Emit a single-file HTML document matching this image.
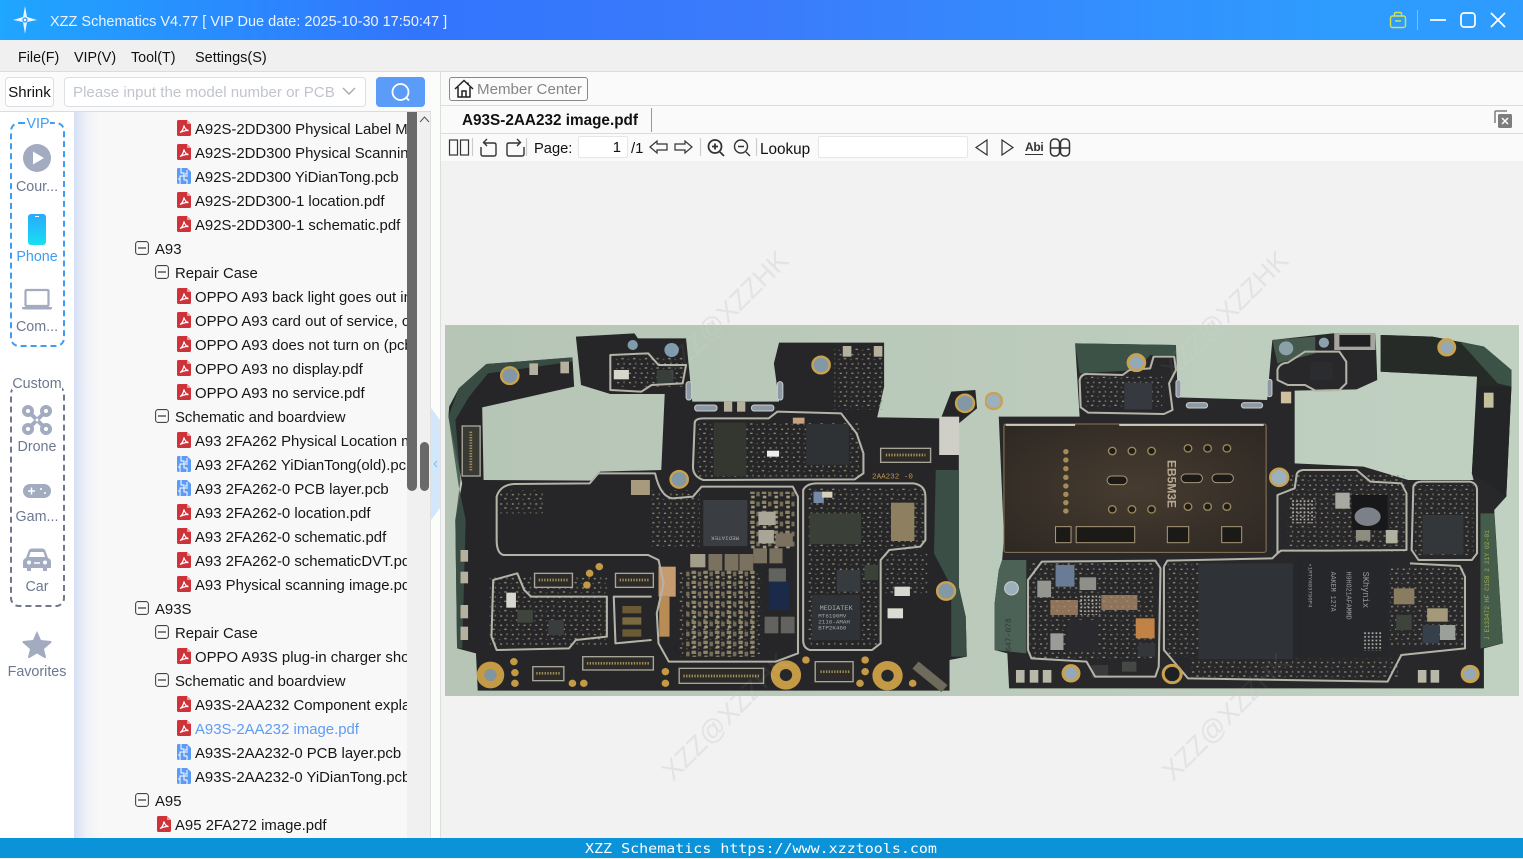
<!DOCTYPE html>
<html><head><meta charset="utf-8"><style>
*{box-sizing:border-box}
html,body{margin:0;padding:0;width:1523px;height:858px;overflow:hidden;background:#f2f2f2;font-family:"Liberation Sans","Noto Sans CJK SC",sans-serif;color:#111}
.a{position:absolute;white-space:nowrap}
.r{position:absolute;white-space:nowrap;overflow:hidden;height:30px;line-height:29px;font-size:14.9px;color:#161616}
.s{position:absolute;left:0;width:74px;text-align:center;font-size:14.3px;color:#6d7890;white-space:nowrap;line-height:20px}
svg{position:absolute;overflow:visible}
</style></head><body>
<svg width="0" height="0" style="left:0;top:0"><defs>
<symbol id="pdf" viewBox="0 0 14 16"><path d="M1.5 0H10L14 4V14.5Q14 16 12.5 16H1.5Q0 16 0 14.5V1.5Q0 0 1.5 0Z" fill="#cf3238"/><path d="M10 0V4H14Z" fill="#ee9a9c"/><path d="M3 12.5C5 11.5 6.5 8.5 7 5.5C7.6 8.5 9 10 11.5 10.5C9 10.3 6 11 3 12.5Z" fill="none" stroke="#fff" stroke-width="1.2"/></symbol>
<symbol id="pcb" viewBox="0 0 14 16"><path d="M1.5 0H10L14 4V14.5Q14 16 12.5 16H1.5Q0 16 0 14.5V1.5Q0 0 1.5 0Z" fill="#5b9af5"/><path d="M4 0V5H7V8H3V16M10 2V6H8M11 8H7M7 8V12H10V16M1 11H3" fill="none" stroke="#fff" stroke-width="1"/></symbol>
<symbol id="min" viewBox="0 0 14 14"><rect x=".6" y=".6" width="12.8" height="12.8" rx="2.5" fill="#fafafa" stroke="#444" stroke-width="1.1"/><path d="M3 7H11" stroke="#333" stroke-width="1.2"/></symbol>
<pattern id="p1" width="34" height="28" patternUnits="userSpaceOnUse"><rect x="2" y="2" width="7" height="4" fill="#a8a38e"/><rect x="20" y="5" width="5" height="3" fill="#6f6d64"/><rect x="8" y="16" width="4" height="6" fill="#857c62"/><rect x="24" y="18" width="6" height="4" fill="#a9a697"/></pattern>
<pattern id="p2" width="34" height="30" patternUnits="userSpaceOnUse"><rect x="2" y="2" width="13" height="10" fill="#8f8364"/><rect x="20" y="5" width="10" height="14" fill="#766d57"/><rect x="5" y="17" width="10" height="8" fill="#a59c7e"/></pattern>
<pattern id="p3" width="11" height="11" patternUnits="userSpaceOnUse"><rect x="2" y="2" width="5" height="5" fill="#b3b0a4"/></pattern>
<radialGradient id="can" cx=".5" cy=".5" r=".65"><stop offset="0" stop-color="#473c30"/><stop offset="1" stop-color="#2f2924"/></radialGradient>
</defs></svg>

<!-- title bar -->
<div class="a" style="left:0;top:0;width:1523px;height:40px;background:linear-gradient(90deg,#1fa6ff 0,#3275fd 27%,#3b7bfb 50%,#2e9cff 88%,#2e9cff 100%)"></div>
<svg style="left:12px;top:5px" width="26" height="30" viewBox="0 0 26 30"><path d="M13 1L15 12L25 15L15 17L13 29L11 17L1 15L11 12Z" fill="#e9f4ff"/><circle cx="13" cy="15" r="2.6" fill="#3a9cff"/><circle cx="13" cy="15" r="1.2" fill="#fff"/></svg>
<div class="a" style="left:50px;top:12px;font-size:14.5px;line-height:20px;color:#eaf3ff">XZZ Schematics V4.77 [ VIP Due date: 2025-10-30 17:50:47 ]</div>
<svg style="left:1389px;top:11px" width="18" height="18" viewBox="0 0 18 18" fill="none" stroke="#d6e04a" stroke-width="1.4"><rect x="1.5" y="5" width="15" height="11.5" rx="2"/><path d="M5.5 5V2.8Q5.5 1.5 7 1.5H11Q12.5 1.5 12.5 2.8V5M6 10H12"/></svg>
<div class="a" style="left:1417px;top:10px;width:1px;height:20px;background:#7cbcff"></div>
<svg style="left:1428px;top:10px" width="84" height="20" viewBox="0 0 84 20" fill="none" stroke="#fff" stroke-width="1.7"><path d="M2 10H18"/><rect x="33" y="3" width="14" height="14" rx="3"/><path d="M63 3L77 17M77 3L63 17"/></svg>

<!-- menu -->
<div class="a" style="left:0;top:40px;width:1523px;height:32px;background:#f0f0f0;border-bottom:1px solid #dcdcdc"></div>
<div class="a" style="left:18px;top:48px;font-size:14.3px;line-height:20px">File(F)</div>
<div class="a" style="left:74px;top:48px;font-size:14.3px;line-height:20px">VIP(V)</div>
<div class="a" style="left:131px;top:48px;font-size:14.3px;line-height:20px">Tool(T)</div>
<div class="a" style="left:195px;top:48px;font-size:14.5px;line-height:20px">Settings(S)</div>

<!-- left top row -->
<div class="a" style="left:0;top:72px;width:431px;height:40px;background:#fbfbfb;border-bottom:1px solid #dcdcdc"></div>
<div class="a" style="left:5px;top:77px;width:49px;height:30px;border:1px solid #dcdfe6;border-radius:4px;background:#fff;font-size:15px;line-height:30px;text-align:center">Shrink</div>
<div class="a" style="left:64px;top:77px;width:302px;height:30px;border:1px solid #dcdfe6;border-radius:4px;background:#fff;font-size:15.1px;line-height:30px;color:#c0c4cc;padding-left:8px">Please input the model number or PCB</div>
<svg style="left:342px;top:87px" width="14" height="9" viewBox="0 0 14 9" fill="none" stroke="#a8abb2" stroke-width="1.4"><path d="M1 1L7 7L13 1"/></svg>
<div class="a" style="left:376px;top:77px;width:49px;height:30px;border-radius:4px;background:#5a9cf8"></div>
<svg style="left:390px;top:82px" width="22" height="20" viewBox="0 0 22 20" fill="none" stroke="#fff" stroke-width="1.8"><circle cx="10.5" cy="10" r="8"/><path d="M16 15.5L19 18.5"/></svg>

<!-- sidebar -->
<div class="a" style="left:0;top:112px;width:74px;height:726px;background:#fff"></div>
<div class="a" style="left:74px;top:112px;width:333px;height:726px;background:linear-gradient(90deg,#d6e0f4 0,#eef1f7 12px,#f8f8f8 26px,#f8f8f8 100%)"></div>
<div class="a" style="left:407px;top:112px;width:24px;height:726px;background:#f0f0f0;border-right:1px solid #e0e0e0"></div>
<div class="a" style="left:431px;top:72px;width:10px;height:766px;background:#fbfdfb;border-right:1px solid #dedede"></div>
<div class="a" style="left:407px;top:112px;width:10px;height:379px;background:#696969;border-radius:0 0 5px 5px"></div>
<div class="a" style="left:420px;top:442px;width:9px;height:49px;background:#696969;border-radius:5px"></div>
<svg style="left:419px;top:116px" width="11" height="7" viewBox="0 0 11 7" fill="none" stroke="#555" stroke-width="1"><path d="M1 6L5.5 1L10 6"/></svg>
<svg style="left:431px;top:408px" width="10" height="112" viewBox="0 0 10 112"><path d="M0 0L9 12V100L0 112Z" fill="#d3e7fb"/><path d="M6 53L3 56L6 59" fill="none" stroke="#8ab8ee" stroke-width="1"/></svg>

<div class="a" style="left:10px;top:122px;width:55px;height:225px;border:2px dashed #3d9df5;border-radius:9px"></div>
<div class="a" style="left:26px;top:114px;width:24px;height:18px;background:#fff;color:#3d9df5;font-size:14.3px;text-align:center;line-height:20px">VIP</div>
<svg style="left:23px;top:144px" width="28" height="28" viewBox="0 0 28 28"><circle cx="14" cy="14" r="14" fill="#a2abc0"/><path d="M10 7.5L21 14L10 20.5Z" fill="#fff"/></svg>
<div class="s" style="top:177px">Cour...</div>
<svg style="left:28px;top:214px" width="18" height="31" viewBox="0 0 18 31"><defs><linearGradient id="ph" x1="0" y1="0" x2="0" y2="1"><stop offset="0" stop-color="#2aa9ff"/><stop offset="1" stop-color="#18dff0"/></linearGradient></defs><rect width="18" height="31" rx="3" fill="url(#ph)"/><path d="M7 2.5H11" stroke="#fff" stroke-width="1"/></svg>
<div class="s" style="top:247px;color:#3d9df5">Phone</div>
<svg style="left:22px;top:289px" width="30" height="21" viewBox="0 0 30 21"><rect x="3.5" y="1" width="23" height="16" rx="1" fill="#fff" stroke="#a2abc0" stroke-width="2.2"/><path d="M0 18H30V19Q30 20.5 28 20.5H2Q0 20.5 0 19Z" fill="#a2abc0"/></svg>
<div class="s" style="top:317px">Com...</div>

<div class="a" style="left:10px;top:385px;width:55px;height:222px;border:2px dashed #70778a;border-radius:9px"></div>
<div class="s" style="top:374px;left:12px;width:50px;background:#fff;height:16px">Custom</div>
<svg style="left:22px;top:405px" width="30" height="30" viewBox="0 0 30 30" fill="none" stroke="#a2abc0"><g stroke-width="4"><circle cx="6" cy="6" r="4"/><circle cx="24" cy="6" r="4"/><circle cx="6" cy="24" r="4"/><circle cx="24" cy="24" r="4"/><path d="M8 8L22 22M22 8L8 22"/></g><circle cx="15" cy="15" r="2" fill="#fff" stroke-width="1"/></svg>
<div class="s" style="top:437px">Drone</div>
<svg style="left:23px;top:484px" width="28" height="14" viewBox="0 0 28 14"><rect width="28" height="14" rx="7" fill="#a2abc0"/><path d="M5 7H12M8.500 3.500V10.500" stroke="#fff" stroke-width="1.5"/><circle cx="18" cy="5" r="1" fill="#fff"/><circle cx="22" cy="9" r="1" fill="#fff"/></svg>
<div class="s" style="top:507px">Gam...</div>
<svg style="left:23px;top:548px" width="28" height="23" viewBox="0 0 28 23"><path d="M3 10L5.500 3Q6.500 .5 9 .5H19Q21.500 .5 22.500 3L25 10Q28 11 28 14V20H24V23H20V20H8V23H4V20H0V14Q0 11 3 10Z" fill="#a2abc0"/><path d="M6 9L7.500 4H20.500L22 9Z" fill="#fff"/><circle cx="6" cy="14.500" r="2" fill="#fff"/><circle cx="22" cy="14.500" r="2" fill="#fff"/><path d="M11 15H17" stroke="#fff" stroke-width="1.500"/></svg>
<div class="s" style="top:577px">Car</div>
<svg style="left:22px;top:630px" width="30" height="28" viewBox="0 0 30 28"><path d="M15 1L19 10L29 11Q30 12 29 13L22 19L24 27Q24 28 22.500 28L15 23.500L7.500 28Q6 28 6 27L8 19L1 13Q0 12 1 11L11 10Z" fill="#a2abc0"/></svg>
<div class="s" style="top:662px">Favorites</div>

<!-- tree -->
<svg style="left:0;top:0" width="1" height="1">
<use href="#pdf" x="177" y="120" width="14" height="16"/><use href="#pdf" x="177" y="144" width="14" height="16"/><use href="#pcb" x="177" y="168" width="14" height="16"/><use href="#pdf" x="177" y="192" width="14" height="16"/><use href="#pdf" x="177" y="216" width="14" height="16"/>
<use href="#min" x="135" y="241" width="14" height="14"/><use href="#min" x="155" y="265" width="14" height="14"/>
<use href="#pdf" x="177" y="288" width="14" height="16"/><use href="#pdf" x="177" y="312" width="14" height="16"/><use href="#pdf" x="177" y="336" width="14" height="16"/><use href="#pdf" x="177" y="360" width="14" height="16"/><use href="#pdf" x="177" y="384" width="14" height="16"/>
<use href="#min" x="155" y="409" width="14" height="14"/>
<use href="#pdf" x="177" y="432" width="14" height="16"/><use href="#pcb" x="177" y="456" width="14" height="16"/><use href="#pcb" x="177" y="480" width="14" height="16"/><use href="#pdf" x="177" y="504" width="14" height="16"/><use href="#pdf" x="177" y="528" width="14" height="16"/><use href="#pdf" x="177" y="552" width="14" height="16"/><use href="#pdf" x="177" y="576" width="14" height="16"/>
<use href="#min" x="135" y="601" width="14" height="14"/><use href="#min" x="155" y="625" width="14" height="14"/>
<use href="#pdf" x="177" y="648" width="14" height="16"/>
<use href="#min" x="155" y="673" width="14" height="14"/>
<use href="#pdf" x="177" y="696" width="14" height="16"/><use href="#pdf" x="177" y="720" width="14" height="16"/><use href="#pcb" x="177" y="744" width="14" height="16"/><use href="#pcb" x="177" y="768" width="14" height="16"/>
<use href="#min" x="135" y="793" width="14" height="14"/>
<use href="#pdf" x="157" y="816" width="14" height="16"/>
</svg>
<div class="r" style="left:195px;width:212px;top:116px">A92S-2DD300 Physical Label Map.pdf</div>
<div class="r" style="left:195px;width:212px;top:140px">A92S-2DD300 Physical Scanning.pdf</div>
<div class="r" style="left:195px;width:212px;top:164px">A92S-2DD300 YiDianTong.pcb</div>
<div class="r" style="left:195px;width:212px;top:188px">A92S-2DD300-1 location.pdf</div>
<div class="r" style="left:195px;width:212px;top:212px">A92S-2DD300-1 schematic.pdf</div>
<div class="r" style="left:155px;top:236px">A93</div>
<div class="r" style="left:175px;top:260px">Repair Case</div>
<div class="r" style="left:195px;width:212px;top:284px">OPPO A93 back light goes out in use.pdf</div>
<div class="r" style="left:195px;width:212px;top:308px">OPPO A93 card out of service, can not</div>
<div class="r" style="left:195px;width:212px;top:332px">OPPO A93 does not turn on (pcb).pdf</div>
<div class="r" style="left:195px;width:212px;top:356px">OPPO A93 no display.pdf</div>
<div class="r" style="left:195px;width:212px;top:380px">OPPO A93 no service.pdf</div>
<div class="r" style="left:175px;top:404px">Schematic and boardview</div>
<div class="r" style="left:195px;width:212px;top:428px">A93 2FA262 Physical Location map.pdf</div>
<div class="r" style="left:195px;width:212px;top:452px">A93 2FA262 YiDianTong(old).pcb</div>
<div class="r" style="left:195px;width:212px;top:476px">A93 2FA262-0 PCB layer.pcb</div>
<div class="r" style="left:195px;width:212px;top:500px">A93 2FA262-0 location.pdf</div>
<div class="r" style="left:195px;width:212px;top:524px">A93 2FA262-0 schematic.pdf</div>
<div class="r" style="left:195px;width:212px;top:548px">A93 2FA262-0 schematicDVT.pdf</div>
<div class="r" style="left:195px;width:212px;top:572px">A93 Physical scanning image.pdf</div>
<div class="r" style="left:155px;top:596px">A93S</div>
<div class="r" style="left:175px;top:620px">Repair Case</div>
<div class="r" style="left:195px;width:212px;top:644px">OPPO A93S plug-in charger shows</div>
<div class="r" style="left:175px;top:668px">Schematic and boardview</div>
<div class="r" style="left:195px;width:212px;top:692px">A93S-2AA232 Component explain.pdf</div>
<div class="r" style="left:195px;width:212px;top:716px;color:#5f9bf5">A93S-2AA232 image.pdf</div>
<div class="r" style="left:195px;width:212px;top:740px">A93S-2AA232-0 PCB layer.pcb</div>
<div class="r" style="left:195px;width:212px;top:764px">A93S-2AA232-0 YiDianTong.pcb</div>
<div class="r" style="left:155px;top:788px">A95</div>
<div class="r" style="left:175px;top:812px;height:26px">A95 2FA272 image.pdf</div>

<!-- right panel header -->
<div class="a" style="left:441px;top:72px;width:1082px;height:34px;background:#fafafa;border-bottom:1px solid #dcdcdc"></div>
<div class="a" style="left:449px;top:77px;width:139px;height:24px;border:1px solid #888;border-radius:3px;background:#fbfbfb;font-size:15.1px;line-height:23px;color:#868686;padding-left:27px">Member Center</div>
<svg style="left:454px;top:79px" width="20" height="20" viewBox="0 0 20 20" fill="none" stroke="#222" stroke-width="1.500"><path d="M1 10L10 1.500L19 10M4 8V18H16V8M8 18V12H12V18M14 3.500V6"/></svg>
<div class="a" style="left:441px;top:106px;width:1082px;height:28px;background:#fafafa;border-bottom:1px solid #dcdcdc"></div>
<div class="a" style="left:462px;top:111px;font-size:15.3px;font-weight:bold;line-height:20px">A93S-2AA232 image.pdf</div>
<div class="a" style="left:651px;top:108px;width:1px;height:24px;background:#999"></div>
<svg style="left:1494px;top:110px" width="18" height="18" viewBox="0 0 18 18"><path d="M1 13V2Q1 1 2 1H13" fill="none" stroke="#7d7d7d" stroke-width="1.500"/><rect x="4" y="4" width="14" height="14" rx="1.500" fill="#7d7d7d"/><path d="M8 8L14 14M14 8L8 14" stroke="#fff" stroke-width="1.500"/></svg>

<!-- toolbar -->
<div class="a" style="left:441px;top:134px;width:1082px;height:27px;background:#fafafa"></div>
<svg style="left:441px;top:134px" width="640" height="27" viewBox="0 0 640 27" fill="none" stroke="#333" stroke-width="1.200">
<rect x="8.500" y="6" width="8" height="15"/><rect x="19.500" y="6" width="8" height="15"/>
<path d="M31.500 4V22" stroke="#ccc"/>
<path d="M40 13V20Q40 22 42 22H53Q55 22 55 20V11Q55 9 53 9H43M46 5L42.500 8.500L46 12" stroke-width="1.400"/>
<path d="M66 20V11Q66 9 68 9H79M76 5L79.500 8.500L76 12M83 13V20Q83 22 81 22H68Q66 22 66 20" stroke-width="1.400"/>
<path d="M85.500 4V22" stroke="#ccc"/>
<path d="M209 13L216 7V10H226V16H216V19Z"/><path d="M251 13L244 7V10H234V16H244V19Z"/>
<path d="M259.500 4V22" stroke="#ccc"/>
<circle cx="274" cy="12.500" r="6.500" stroke-width="1.800"/><path d="M279 18L283 22M271 12.500H277M274 9.500V15.500" stroke-width="1.800"/>
<circle cx="300" cy="12.500" r="6.500" stroke-width="1.400"/><path d="M305 18L309 22M297 12.500H303" stroke-width="1.400"/>
<path d="M315.500 4V22" stroke="#ccc"/>
<path d="M546 6L535 13.500L546 21Z M561 6L572 13.500L561 21Z"/>
<path d="M584 20.500H602" stroke-width="1"/>
<g stroke-width="1.500"><rect x="609.500" y="5" width="9" height="17" rx="4"/><rect x="619.500" y="5" width="9" height="17" rx="4"/><path d="M609.500 14H618.500M619.500 14H628.500M618 9H620"/></g>
</svg>
<div class="a" style="left:534px;top:139px;font-size:14.7px;line-height:21px">Page:</div>
<div class="a" style="left:578px;top:136px;width:50px;height:22px;background:#fff;border:1px solid #e6e6e6;border-radius:2px;font-size:14.9px;line-height:23px;text-align:right;padding-right:6px">1</div>
<div class="a" style="left:631px;top:139px;font-size:14.9px;line-height:21px">/1</div>
<div class="a" style="left:760px;top:139px;font-size:15.3px;line-height:21px">Lookup</div>
<div class="a" style="left:818px;top:136px;width:150px;height:22px;background:#fff;border:1px solid #e6e6e6;border-radius:2px"></div>
<div class="a" style="left:1025px;top:140px;font-size:12px;font-weight:bold;line-height:15px;color:#333;letter-spacing:-.3px">Abi</div>

<!-- watermarks behind image -->
<svg style="left:0;top:0" width="1523" height="858" viewBox="0 0 1523 858" font-family="Liberation Sans" font-size="27" fill="#e3e3e3">
<text transform="translate(672,380) rotate(-45)">XZZ@XZZHK</text>
<text transform="translate(1172,380) rotate(-45)">XZZ@XZZHK</text>
<text transform="translate(673,782) rotate(-45)">XZZ@XZZHK</text>
<text transform="translate(1173,782) rotate(-45)">XZZ@XZZHK</text>
</svg>

<!-- PCB image -->
<svg style="left:445px;top:325px" width="1074" height="371" viewBox="0 0 1074 371"><defs><linearGradient id="bg"><stop offset="0" stop-color="#b6c5b5"/><stop offset="1" stop-color="#c0d0c1"/></linearGradient></defs><rect width="1074" height="371" fill="url(#bg)"/></svg>

<svg style="left:445px;top:320px;clip-path:inset(5px 0 0 0)" width="540" height="376" viewBox="0 0 1568 1128" preserveAspectRatio="none">
<path d="M10 290L12 260L40 205L120 132L370 112L375 200L160 250L108 262L112 480L430 482L450 455L628 450L638 222L480 222L395 195L380 50L550 40L560 55L700 55L718 245L970 245L955 130L970 68L1275 68L1275 200L1255 292L1440 295L1470 215L1540 210L1545 265L1492 310L1492 800L1512 890L1515 1010L1465 1020L1465 1112L95 1112L90 1000L35 985L30 600L50 490Z" fill="#262628"/>
<path d="M10 290L40 205L120 132L370 112L370 125L125 160L70 230L30 300L45 480L30 600L35 985L50 985L60 600L40 500Z" fill="#3d5348" opacity=".85"/>
<path d="M1425 450H1492V800L1512 890L1515 1010L1470 1010L1470 800L1420 700Z" fill="#3a4e45"/>
<g fill="url(#p1)" opacity=".8">
<rect x="130" y="770" width="340" height="210"/><rect x="730" y="305" width="480" height="165"/><rect x="1050" y="500" width="340" height="190"/><rect x="1050" y="690" width="210" height="290"/><rect x="1270" y="700" width="130" height="120"/><rect x="680" y="750" width="240" height="260"/><rect x="600" y="510" width="140" height="170"/><rect x="160" y="510" width="130" height="70"/><rect x="490" y="110" width="200" height="90"/><rect x="1130" y="80" width="140" height="190"/>
</g>
<g fill="url(#p2)"><rect x="885" y="515" width="130" height="175"/><rect x="700" y="750" width="200" height="260"/></g>
<g fill="#7b7160"><rect x="712" y="702" width="44" height="40" fill="#a39d8c"/><rect x="765" y="702" width="40" height="50"/><rect x="812" y="702" width="40" height="50"/><rect x="855" y="702" width="40" height="50"/><rect x="895" y="685" width="40" height="45"/><rect x="942" y="685" width="38" height="45"/><rect x="960" y="640" width="50" height="40"/><rect x="910" y="575" width="50" height="40" fill="#a9a698"/><rect x="910" y="630" width="45" height="40" fill="#a9a698"/><rect x="540" y="480" width="55" height="45" fill="#a89a7c"/></g>
<g fill="#62635f"><rect x="940" y="745" width="50" height="40"/><rect x="928" y="890" width="40" height="50"/><rect x="975" y="890" width="40" height="50"/></g>
<rect x="940" y="785" width="60" height="85" fill="#1b2a48"/>
<rect x="780" y="308" width="95" height="160" fill="#34372f"/>
<rect x="1048" y="312" width="125" height="122" fill="#2e3235"/>
<rect x="750" y="540" width="128" height="138" fill="#3a3d42"/>
<rect x="1058" y="580" width="150" height="92" fill="#3a3f38"/>
<rect x="1065" y="825" width="140" height="135" fill="#2f3237"/>
<rect x="1138" y="750" width="68" height="65" fill="#363b3f"/>
<rect x="1295" y="548" width="68" height="115" fill="#8e7f61"/>
<rect x="1218" y="735" width="40" height="45" fill="#3a4238"/>
<rect x="210" y="870" width="45" height="38" fill="#3f443d"/>
<rect x="300" y="900" width="45" height="45" fill="#3a3d3e"/>
<rect x="615" y="150" width="48" height="40" fill="#383f3a"/>
<rect x="490" y="150" width="44" height="28" fill="#d8d6cc"/>
<rect x="1070" y="515" width="30" height="34" fill="#7488aa"/>
<rect x="1095" y="515" width="30" height="18" fill="#d6d2b8"/>
<rect x="1305" y="800" width="45" height="28" fill="#d8d8d0"/>
<rect x="1285" y="865" width="45" height="30" fill="#dcdcd4"/>
<rect x="178" y="818" width="28" height="45" fill="#d8d8d0"/>
<rect x="935" y="392" width="35" height="18" fill="#eee"/>
<rect x="1010" y="293" width="34" height="18" fill="#c8a280"/>
<rect x="620" y="740" width="50" height="90" fill="#c69b70"/>
<rect x="622" y="830" width="30" height="120" fill="#b98b55"/>
<rect x="1435" y="290" width="58" height="115" fill="#cfcfc8"/>
<rect x="515" y="858" width="55" height="22" fill="#6b5a35"/><rect x="515" y="892" width="55" height="22" fill="#7a6a40"/><rect x="515" y="928" width="55" height="22" fill="#6b5a35"/>
<g fill="none" stroke="#b4b3a8" stroke-width="6" stroke-linejoin="round">
<path d="M480 105L590 100L620 135L700 135L690 190L600 195L570 215L480 210Z"/>
<path d="M725 310Q725 295 750 295L940 295L965 275L1150 280L1195 340L1215 400L1215 460L1190 478L750 480Q720 470 720 440Z"/>
<path d="M150 530Q160 495 200 492L420 490L445 460L610 460Q625 530 660 535L720 530L745 500L1010 500L1025 530L1025 1000L960 1025L650 1025L620 970L615 880L635 790L620 720L590 705L170 705Q150 700 150 660Z"/>
<path d="M1040 510Q1050 490 1080 490L1360 490Q1395 495 1395 530L1395 660L1380 680L1290 690L1265 720L1265 970L1240 990L1060 990Q1040 985 1040 960Z"/>
<path d="M140 780L210 760L230 810L250 830L470 830L470 950L380 960L360 985L150 990L135 950Z"/>
<path d="M600 830H490L495 970L600 960"/>
</g>
<g fill="#2c2b29" stroke="#a8a698" stroke-width="4">
<rect x="50" y="318" width="52" height="150" fill="#3a3a35"/><rect x="1265" y="385" width="145" height="42"/><rect x="400" y="1010" width="205" height="40"/><rect x="680" y="1045" width="245" height="45"/><rect x="1075" y="1025" width="110" height="60"/><rect x="260" y="760" width="110" height="42"/><rect x="495" y="760" width="110" height="42"/><rect x="255" y="1040" width="90" height="42"/>
</g>
<g fill="none" stroke="#a38f56" stroke-width="8" stroke-dasharray="4 4"><path d="M75 335V455M1280 405H1395M412 1030H595M692 1068H915M1090 1055H1175M272 780H360M507 780H595M265 1060H335"/></g>
<g fill="#c49a45"><circle cx="132" cy="1065" r="40"/><circle cx="990" cy="1065" r="44"/><circle cx="1285" cy="1067" r="44"/></g>
<g fill="#7f95a0"><circle cx="132" cy="1065" r="18"/></g>
<g fill="#25282a"><circle cx="990" cy="1065" r="18"/><circle cx="1285" cy="1067" r="18"/></g>
<g fill="#8298a6" stroke="#c9a24e" stroke-width="7"><circle cx="188" cy="167" r="25"/><circle cx="680" cy="478" r="25"/><circle cx="1092" cy="135" r="25"/><circle cx="1510" cy="250" r="26"/><circle cx="1455" cy="813" r="26"/></g>
<circle cx="658" cy="90" r="21" fill="#7f9bac"/><circle cx="545" cy="75" r="15" fill="#7f9bac"/>
<g fill="#c49a45"><circle cx="200" cy="1025" r="11"/><circle cx="203" cy="1058" r="11"/><circle cx="203" cy="1090" r="11"/><circle cx="420" cy="760" r="11"/><circle cx="448" cy="740" r="11"/><circle cx="412" cy="795" r="11"/><circle cx="640" cy="1055" r="11"/><circle cx="640" cy="1090" r="11"/><circle cx="370" cy="1090" r="11"/><circle cx="403" cy="1090" r="11"/><circle cx="1048" cy="1020" r="11"/><circle cx="1220" cy="1020" r="11"/><circle cx="1220" cy="1055" r="11"/><circle cx="1205" cy="1090" r="11"/><circle cx="1358" cy="1090" r="11"/></g>
<g fill="#b5b19e"><rect x="45" y="690" width="22" height="35"/><rect x="45" y="755" width="22" height="35"/><rect x="45" y="855" width="22" height="40"/><rect x="45" y="920" width="22" height="40"/><rect x="245" y="130" width="25" height="35"/><rect x="335" y="125" width="25" height="35"/><rect x="1155" y="78" width="25" height="32"/><rect x="1245" y="78" width="25" height="32"/><rect x="810" y="245" width="24" height="30"/><rect x="848" y="245" width="24" height="30"/></g>
<g fill="#8b9aa5" stroke="#ccc" stroke-width="3"><rect x="725" y="255" width="65" height="18" rx="8"/><rect x="890" y="255" width="65" height="18" rx="8"/><rect x="965" y="185" width="16" height="55" rx="8"/><rect x="700" y="185" width="16" height="55" rx="8"/></g>
<g fill="#6e6a5c" transform="rotate(40 1400 1065)"><rect x="1355" y="1050" width="110" height="28"/></g>
<text x="1240" y="475" font-family="Liberation Mono" font-size="22" fill="#c29a4a">2AA232  -0</text>
<g font-family="Liberation Mono" font-size="17" fill="#a8aaa6"><text x="1088" y="870" font-size="20">MEDIATEK</text><text x="1084" y="892">MT6190MV</text><text x="1084" y="910">2116-AMAH</text><text x="1084" y="928">BTP2K460</text><text transform="translate(814,650) rotate(180)" x="-40" font-size="17">MEDIATEK</text></g>
</svg>

<svg style="left:985px;top:320px;clip-path:inset(5px 0 0 0)" width="534" height="376" viewBox="0 0 1552 1128" preserveAspectRatio="none">
<path d="M40 290L275 290L262 70L555 75L560 232L820 240L835 60L1010 40L1135 40L1140 180L1080 208L900 212L900 430L1100 440L1230 480L1420 480L1415 460L1430 170L1150 155L1150 45L1300 50L1450 80L1530 150L1530 200L1515 530L1480 570L1505 970L1450 985L1450 1105L70 1105L65 1000L28 990L28 850L40 750L50 720L55 650Z" fill="#28282a"/>
<path d="M262 70L555 75L555 105L480 105L440 150L275 160Z" fill="#3c5246"/>
<path d="M1150 45L1300 50L1450 80L1530 150L1530 200H1430V170L1150 155Z" fill="#262b28"/>
<path d="M1380 65L1450 80L1530 150L1530 200L1490 190Z" fill="#3b5347"/>
<path d="M1430 200H1530L1515 530L1415 460Z" fill="#242526"/>
<path d="M1440 580H1480L1505 970L1440 985Z" fill="#445c4a"/>
<path d="M28 850L40 750L50 720L120 720L120 1000L28 990Z" fill="#4d6256"/>
<path d="M835 60L960 50L960 100L850 130Z" fill="#455a4d"/>
<rect x="55" y="312" width="762" height="385" rx="6" fill="url(#can)" stroke="#8c7757" stroke-width="3"/>
<path d="M60 315H262M390 315H810" stroke="#d8d4c8" stroke-width="5"/>
<g fill="url(#p1)" opacity=".8"><rect x="130" y="725" width="365" height="290"/><rect x="880" y="465" width="340" height="230"/><rect x="1250" y="495" width="170" height="210"/><rect x="1170" y="740" width="220" height="240"/><rect x="285" y="170" width="230" height="90"/><rect x="530" y="730" width="90" height="280"/><rect x="600" y="1015" width="600" height="60"/></g>
<rect x="890" y="540" width="70" height="70" fill="url(#p3)"/>
<rect x="275" y="825" width="60" height="60" fill="url(#p3)"/>
<rect x="620" y="730" width="275" height="287" fill="#2f3236"/>
<rect x="910" y="712" width="260" height="302" fill="#25272b"/>
<rect x="1100" y="935" width="55" height="58" fill="url(#p3)"/>
<rect x="405" y="188" width="80" height="80" fill="#363a40"/>
<rect x="945" y="125" width="65" height="55" fill="#2b2c30"/>
<rect x="1272" y="585" width="118" height="118" fill="#34373a"/>
<rect x="240" y="900" width="90" height="95" fill="#2a2a2e"/>
<rect x="1065" y="525" width="105" height="105" fill="#18181b"/>
<ellipse cx="1112" cy="590" rx="38" ry="28" fill="#7c8088"/>
<rect x="1018" y="518" width="42" height="48" fill="#a7aaa0"/><rect x="1078" y="630" width="42" height="32" fill="#8f8d80"/><rect x="1165" y="630" width="34" height="40" fill="#b1b1a2"/>
<rect x="205" y="735" width="55" height="65" fill="#6a7c95"/><rect x="152" y="782" width="40" height="50" fill="#94978f"/><rect x="275" y="772" width="48" height="38" fill="#8c9088"/><rect x="190" y="940" width="38" height="50" fill="#9a9d97"/>
<rect x="190" y="840" width="80" height="45" fill="#b08c6c" opacity=".75"/><rect x="338" y="825" width="105" height="45" fill="#b08c6c" opacity=".75"/>
<rect x="438" y="895" width="55" height="60" fill="#c08345"/>
<rect x="1188" y="805" width="60" height="48" fill="#897c60"/><rect x="1195" y="885" width="45" height="45" fill="#3c443c"/><rect x="1272" y="915" width="48" height="55" fill="#35404a"/><rect x="1322" y="915" width="45" height="45" fill="#9ca09a"/><rect x="1285" y="865" width="60" height="40" fill="#a49a7a"/>
<rect x="310" y="1035" width="48" height="38" fill="#3a3a3c"/><rect x="398" y="1025" width="42" height="30" fill="#464846"/><rect x="445" y="970" width="50" height="40" fill="#33373a"/>
<g fill="none" stroke="#b4b3a8" stroke-width="6" stroke-linejoin="round">
<path d="M275 180Q280 160 300 162L400 165L420 150L480 145L490 110H550L555 150L535 190L545 270L520 282L300 278L278 262Z"/>
<path d="M850 150Q855 130 880 128L930 95H1030L1050 125L1050 190L1030 210L960 212L930 195L880 195L850 180Z"/>
<path d="M905 470Q905 452 925 450L1080 450L1120 485L1210 490L1225 520L1225 690L1000 692H860L850 700L850 525L900 505Z"/>
<path d="M1245 500Q1250 485 1270 485H1410Q1430 490 1430 510L1430 700L1415 720H1260L1240 690Z"/>
<path d="M125 780L165 725L495 722L510 745L505 1040L495 1070L320 1070L295 1025L135 1015L125 990Z"/>
<path d="M520 740L530 722L835 715L850 700M520 740V990L590 1075L1170 1085L1210 1005L1395 985V770L1380 738L1235 730"/>
</g>
<g fill="#1d1c1a" stroke="#9c8758" stroke-width="4"><circle cx="370" cy="393" r="11"/><circle cx="427" cy="393" r="11"/><circle cx="484" cy="393" r="11"/><circle cx="590" cy="385" r="11"/><circle cx="647" cy="385" r="11"/><circle cx="703" cy="385" r="11"/><circle cx="370" cy="568" r="11"/><circle cx="427" cy="568" r="11"/><circle cx="484" cy="568" r="11"/><circle cx="590" cy="560" r="11"/><circle cx="647" cy="560" r="11"/><circle cx="703" cy="560" r="11"/></g>
<g fill="#a78a55"><circle cx="235" cy="395" r="8"/><circle cx="235" cy="420" r="8"/><circle cx="235" cy="446" r="8"/><circle cx="235" cy="472" r="8"/><circle cx="235" cy="498" r="8"/><circle cx="235" cy="523" r="8"/><circle cx="235" cy="548" r="8"/><circle cx="235" cy="573" r="8"/></g>
<g fill="#1c1a16" stroke="#a8977a" stroke-width="3"><rect x="355" y="468" width="58" height="26" rx="13"/><rect x="570" y="462" width="62" height="26" rx="13"/><rect x="660" y="462" width="62" height="26" rx="13"/><rect x="205" y="620" width="45" height="48"/><rect x="265" y="620" width="170" height="48"/><rect x="530" y="620" width="62" height="48"/><rect x="688" y="620" width="58" height="48"/></g>
<text transform="translate(530,420) rotate(90)" font-family="Liberation Sans" font-size="36" font-weight="bold" fill="#b7ab94">EB5M3E</text>
<g font-family="Liberation Mono" fill="#9a9c98"><text transform="translate(1098,755) rotate(90)" font-size="26">SKhynix</text><text transform="translate(1050,755) rotate(90)" font-size="20">H9HO21AFAMMD</text><text transform="translate(1005,755) rotate(90)" font-size="20">AAKEM   127A</text><text transform="translate(940,730) rotate(90)" font-size="17">•1MTYH03790P4</text><text transform="translate(75,995) rotate(-90)" font-size="24" fill="#2e3a34">647-078</text></g>
<text transform="translate(1465,960) rotate(-90)" font-family="Liberation Mono" font-size="19" fill="#a3aa52">J E133472 HF C158 2 21Y 02-01</text>
<g fill="#9db0bd" stroke="#c9a24e" stroke-width="7"><circle cx="25" cy="243" r="24"/><circle cx="855" cy="472" r="26"/></g>
<circle cx="544" cy="1062" r="26" fill="#1f2022" stroke="#c9a24e" stroke-width="9"/>
<g fill="#95a8b6" stroke="#c9a24e" stroke-width="9"><circle cx="440" cy="128" r="24"/><circle cx="1342" cy="82" r="23"/><circle cx="250" cy="1060" r="23"/><circle cx="1410" cy="1062" r="23"/></g>
<circle cx="77" cy="805" r="20" fill="#9cb0bc" stroke="#ccc" stroke-width="3"/>
<circle cx="875" cy="85" r="21" fill="#8ba1a8"/><circle cx="985" cy="68" r="15" fill="#8ba1ae"/>
<rect x="1015" y="40" width="120" height="50" fill="#a5a59e"/><rect x="1030" y="45" width="90" height="35" fill="#1f1f22"/>
<g fill="#b9b7a8"><rect x="90" y="1050" width="25" height="38"/><rect x="130" y="1050" width="25" height="38"/><rect x="168" y="1050" width="25" height="38"/><rect x="1258" y="1050" width="25" height="38"/><rect x="1295" y="1050" width="25" height="38"/></g>
<g fill="#8b9aa5" stroke="#ccc" stroke-width="3"><rect x="585" y="248" width="62" height="16" rx="8"/><rect x="745" y="248" width="62" height="16" rx="8"/><rect x="555" y="180" width="14" height="52" rx="7"/><rect x="820" y="178" width="14" height="52" rx="7"/></g>
<rect x="860" y="215" width="30" height="35" fill="#cdbf9f"/><rect x="1450" y="218" width="28" height="45" fill="#c5bf9c"/>
</svg>

<!-- faint watermark over image -->
<svg style="left:0;top:0;clip-path:inset(325px 0 162px 0)" width="1523" height="858" viewBox="0 0 1523 858" font-family="Liberation Sans" font-size="27" fill="#fff" fill-opacity=".05">
<text transform="translate(672,380) rotate(-45)">XZZ@XZZHK</text>
<text transform="translate(1172,380) rotate(-45)">XZZ@XZZHK</text>
<text transform="translate(673,782) rotate(-45)">XZZ@XZZHK</text>
<text transform="translate(1173,782) rotate(-45)">XZZ@XZZHK</text>
</svg>

<!-- footer -->
<div class="a" style="left:0;top:838px;width:1523px;height:20px;background:#0a93d9"></div>
<div class="a" style="left:585px;top:840px;width:298px;font-family:'DejaVu Sans Mono','Liberation Mono',monospace;font-size:13px;line-height:19px;color:#fff;transform:scaleX(1.153);transform-origin:0 50%">XZZ Schematics https://www.xzztools.com</div>
</body></html>
